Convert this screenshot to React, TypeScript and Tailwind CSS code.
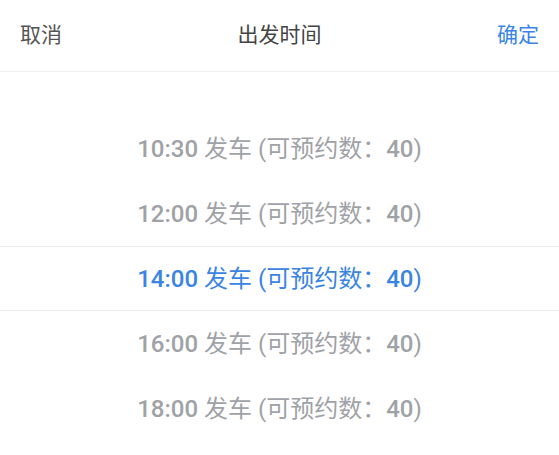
import React from 'react';

const times = ['10:30', '12:00', '14:00', '16:00', '18:00'];
const selected = 2;

export default function App() {
  return (
    <div
      className="w-[559px] h-[455px] bg-white overflow-hidden"
      style={{ fontFamily: 'Roboto, "Noto Sans CJK SC", sans-serif' }}
    >
      {/* Header */}
      <div className="h-[72px] flex items-center justify-between px-5 border-b border-[#eeeeee]">
        <span className="text-[21px] text-[#555555]">取消</span>
        <span className="text-[21px] text-[#444444]">出发时间</span>
        <span className="text-[21px] text-[#3a84e3]">确定</span>
      </div>

      {/* Picker */}
      <div className="pt-[44px]">
        {times.map((t, i) => (
          <div
            key={t}
            className={
              'h-[65px] flex items-center justify-center text-[24px] ' +
              (i === selected
                ? 'text-[#3a84e3] border-y border-[#ececec]'
                : 'text-[#9fa2a7]')
            }
          >
            <span className="font-medium">{t}</span>
            <span>&nbsp;发车 (可预约数：</span>
            <span className="font-medium">40</span>
            <span>)</span>
          </div>
        ))}
      </div>
    </div>
  );
}
